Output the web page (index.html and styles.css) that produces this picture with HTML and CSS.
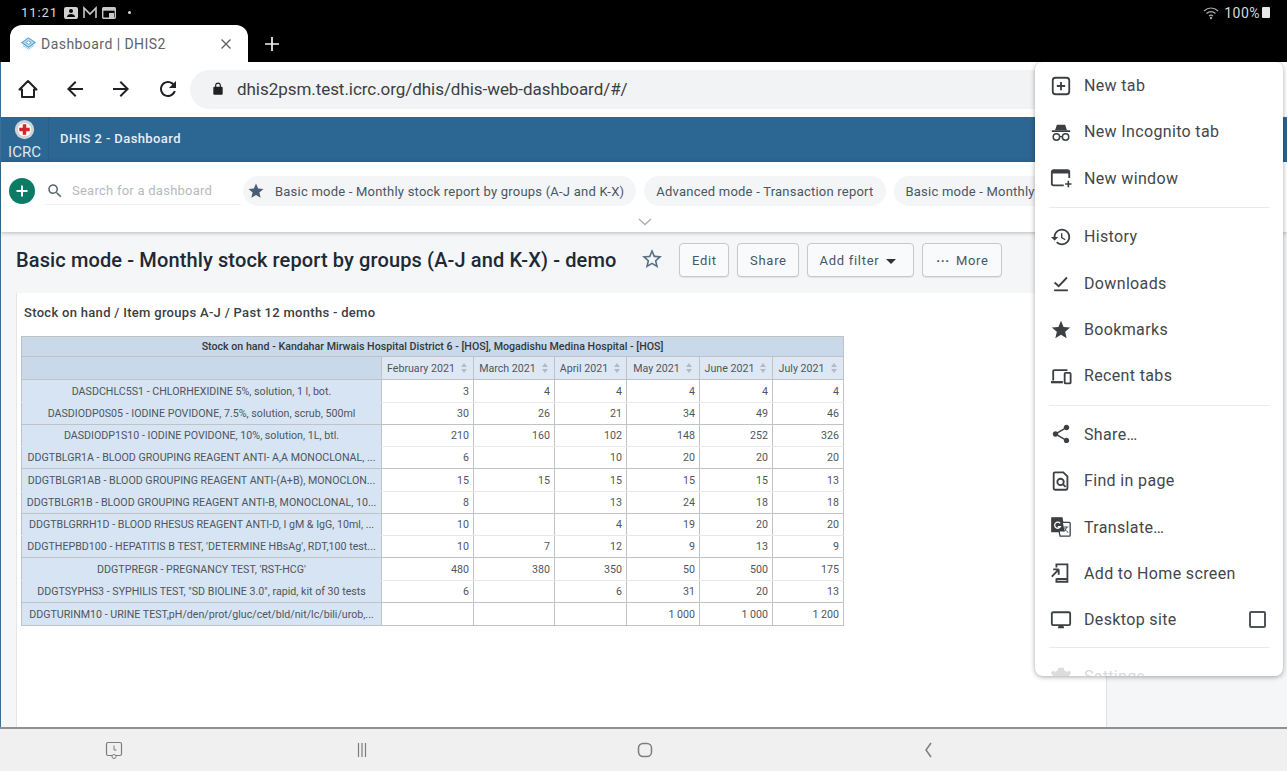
FILE: index.html
```html
<!DOCTYPE html>
<html lang="en">
<head>
    <meta charset="UTF-8">
    <meta name="viewport" content="width=device-width, initial-scale=1.0">
    <title>Dashboard | DHIS2</title>
    <link rel="stylesheet" href="styles.css">
</head>
<body>
    <div class="status-bar">
        <div class="status-left">
            <span class="clock">11:21</span>
            <svg class="status-icon" viewBox="0 0 16 14"><rect x="1" y="1" width="14" height="12" rx="2" fill="#d0d0d0"/><circle cx="8" cy="5" r="2" fill="#000"/><path d="M4 11c0-2 2-3 4-3s4 1 4 3z" fill="#000"/></svg>
            <svg class="status-icon" viewBox="0 0 16 14"><path d="M2 12V2l6 6 6-6v10" fill="none" stroke="#c8c8c8" stroke-width="1.6"/></svg>
            <svg class="status-icon" viewBox="0 0 16 14"><rect x="1.7" y="1.7" width="12.6" height="10.6" rx="1" fill="none" stroke="#c8c8c8" stroke-width="1.4"/><rect x="1.7" y="1.7" width="12.6" height="3" fill="#c8c8c8"/><rect x="8" y="7" width="5" height="5" fill="#c8c8c8"/></svg>
            <span class="status-dot"></span>
        </div>
        <div class="status-right">
            <svg class="wifi" viewBox="0 0 16 14"><path d="M1 5c4-4 10-4 14 0M3.500 7.500c2.600-2.500 6.400-2.500 9 0M6 10c1.200-1 2.800-1 4 0" fill="none" stroke="#a8a8a8" stroke-width="1.200"/><circle cx="8" cy="12" r="1.200" fill="#a8a8a8"/></svg>
            <span class="battery-text">100%</span>
            <span class="battery"></span>
        </div>
    </div>

    <div class="tab-strip">
        <div class="tab">
            <svg class="favicon" viewBox="0 0 16 16"><path d="M8 2l7 5-7 5-7-5z" fill="#bfe0f2" stroke="#5aa7d6" stroke-width="1.300"/><path d="M8 5l3 2-3 2-3-2z" fill="#fff" stroke="#5aa7d6"/><path d="M2 10l6 4 6-4" fill="none" stroke="#8cc4e6" stroke-width="1"/></svg>
            <span class="tab-title">Dashboard | DHIS2</span>
            <svg class="tab-close" viewBox="0 0 12 12"><path d="M1.500 1.500l9 9M10.500 1.500l-9 9" stroke="#5f6368" stroke-width="1.400"/></svg>
        </div>
        <svg class="tab-new" viewBox="0 0 14 14"><path d="M7 0v14M0 7h14" stroke="#f1f3f4" stroke-width="1.700"/></svg>
    </div>

    <div class="app">
        <div class="toolbar">
            <svg class="tool-icon" viewBox="0 0 24 24"><path d="M3.500 12.500L12 4l8.500 8.500H18V20H6v-7.500z" fill="none" stroke="#202124" stroke-width="2" stroke-linejoin="round"/></svg>
            <svg class="tool-icon" viewBox="0 0 24 24"><path d="M20 11H7.830l5.590-5.590L12 4l-8 8 8 8 1.410-1.410L7.830 13H20v-2z" fill="#202124"/></svg>
            <svg class="tool-icon" viewBox="0 0 24 24"><path d="M12 4l-1.410 1.410L16.170 11H4v2h12.170l-5.580 5.590L12 20l8-8z" fill="#202124"/></svg>
            <svg class="tool-icon" viewBox="0 0 24 24"><path d="M17.650 6.350C16.200 4.900 14.210 4 12 4c-4.420 0-7.990 3.580-7.990 8s3.570 8 7.990 8c3.730 0 6.840-2.550 7.730-6h-2.080c-.82 2.330-3.040 4-5.650 4-3.310 0-6-2.690-6-6s2.690-6 6-6c1.660 0 3.140.69 4.220 1.780L13 11h7V4l-2.350 2.350z" fill="#202124"/></svg>
            <div class="url-pill">
                <svg class="lock" viewBox="0 0 24 24"><path d="M18 8h-1V6c0-2.760-2.240-5-5-5S7 3.240 7 6v2H6c-1.100 0-2 .9-2 2v10c0 1.100.9 2 2 2h12c1.100 0 2-.9 2-2V10c0-1.100-.9-2-2-2zM9 6c0-1.660 1.340-3 3-3s3 1.340 3 3v2H9V6z" fill="#202124"/></svg>
                <span class="url-text">dhis2psm.test.icrc.org/dhis/dhis-web-dashboard/#/</span>
            </div>
        </div>

        <header class="app-header">
            <div class="logo">
                <svg class="logo-mark" viewBox="0 0 24 24"><circle cx="12" cy="12" r="11" fill="#cfd3d6"/><circle cx="12" cy="12" r="7.500" fill="#fff"/><path d="M10 6h4v4h4v4h-4v4h-4v-4H6v-4h4z" fill="#d8232a"/></svg>
                <span class="logo-text">ICRC</span>
            </div>
            <span class="app-title">DHIS 2 - Dashboard</span>
        </header>

        <div class="dash-bar">
            <div class="dash-row">
                <span class="add-btn"><svg viewBox="0 0 14 14"><path d="M7 1.500v11M1.500 7h11" stroke="#fff" stroke-width="2"/></svg></span>
                <div class="dash-search">
                    <svg viewBox="0 0 24 24"><path d="M15.500 14h-.79l-.28-.27C15.410 12.590 16 11.110 16 9.500 16 5.910 13.090 3 9.500 3S3 5.910 3 9.500 5.910 16 9.500 16c1.610 0 3.090-.59 4.230-1.570l.27.28v.79l5 4.990L20.490 19l-4.990-5zm-6 0C7.010 14 5 11.990 5 9.500S7.010 5 9.500 5 14 7.010 14 9.500 11.990 14 9.500 14z" fill="#5b6670"/></svg>
                    <span>Search for a dashboard</span>
                </div>
                <div class="chip chip-first">
                    <svg viewBox="0 0 24 24"><path d="M12 17.270L18.180 21l-1.640-7.030L22 9.240l-7.190-.61L12 2 9.190 8.630 2 9.240l5.460 4.730L5.820 21z" fill="#4a5f76"/></svg>
                    <span>Basic mode - Monthly stock report by groups (A-J and K-X)</span>
                </div>
                <div class="chip"><span>Advanced mode - Transaction report</span></div>
                <div class="chip chip-last"><span>Basic mode - Monthly</span></div>
            </div>
            <svg class="chevron" viewBox="0 0 14 8"><path d="M1 1l6 5.500L13 1" fill="none" stroke="#a9b1b8" stroke-width="1.400"/></svg>
        </div>

        <main class="content">
            <div class="title-row">
                <h1>Basic mode - Monthly stock report by groups (A-J and K-X) - demo</h1>
                <svg class="title-star" viewBox="0 0 24 24"><path d="M22 9.240l-7.190-.62L12 2 9.190 8.630 2 9.240l5.460 4.730L5.820 21 12 17.270 18.180 21l-1.630-7.030L22 9.240zM12 15.400l-3.760 2.270 1-4.280-3.320-2.880 4.380-.38L12 6.100l1.710 4.040 4.380.38-3.320 2.880 1 4.280L12 15.400z" fill="#5a6f85"/></svg>
                <div class="title-actions">
                    <button class="btn btn-edit">Edit</button>
                    <button class="btn btn-share">Share</button>
                    <button class="btn btn-filter">Add filter <span class="caret"></span></button>
                    <button class="btn btn-more"><span class="dots">···</span> More</button>
                </div>
            </div>

            <section class="card">
                <h2>Stock on hand / Item groups A-J / Past 12 months - demo</h2>
                <table class="pivot">
                    <colgroup>
                        <col class="col-label">
                        <col class="col-feb">
                        <col class="col-mar">
                        <col class="col-apr">
                        <col class="col-may">
                        <col class="col-jun">
                        <col class="col-jul">
                    </colgroup>
                    <thead>
                        <tr class="head-title"><th colspan="7">Stock on hand - Kandahar Mirwais Hospital District 6 - [HOS], Mogadishu Medina Hospital - [HOS]</th></tr>
                        <tr class="head-periods">
                            <th class="corner"></th>
                            <th>February 2021<span class="sort"></span></th>
                            <th>March 2021<span class="sort"></span></th>
                            <th>April 2021<span class="sort"></span></th>
                            <th>May 2021<span class="sort"></span></th>
                            <th>June 2021<span class="sort"></span></th>
                            <th>July 2021<span class="sort"></span></th>
                        </tr>
                    </thead>
                    <tbody>
                        <tr><th>DASDCHLC5S1 - CHLORHEXIDINE 5%, solution, 1 l, bot.</th><td>3</td><td>4</td><td>4</td><td>4</td><td>4</td><td>4</td></tr>
                        <tr><th>DASDIODP0S05 - IODINE POVIDONE, 7.5%, solution, scrub, 500ml</th><td>30</td><td>26</td><td>21</td><td>34</td><td>49</td><td>46</td></tr>
                        <tr><th>DASDIODP1S10 - IODINE POVIDONE, 10%, solution, 1L, btl.</th><td>210</td><td>160</td><td>102</td><td>148</td><td>252</td><td>326</td></tr>
                        <tr><th>DDGTBLGR1A - BLOOD GROUPING REAGENT ANTI- A,A MONOCLONAL, ...</th><td>6</td><td></td><td>10</td><td>20</td><td>20</td><td>20</td></tr>
                        <tr><th>DDGTBLGR1AB - BLOOD GROUPING REAGENT ANTI-(A+B), MONOCLON...</th><td>15</td><td>15</td><td>15</td><td>15</td><td>15</td><td>13</td></tr>
                        <tr><th>DDGTBLGR1B - BLOOD GROUPING REAGENT ANTI-B, MONOCLONAL, 10...</th><td>8</td><td></td><td>13</td><td>24</td><td>18</td><td>18</td></tr>
                        <tr><th>DDGTBLGRRH1D - BLOOD RHESUS REAGENT ANTI-D, I gM &amp; IgG, 10ml, ...</th><td>10</td><td></td><td>4</td><td>19</td><td>20</td><td>20</td></tr>
                        <tr><th>DDGTHEPBD100 - HEPATITIS B TEST, 'DETERMINE HBsAg', RDT,100 test...</th><td>10</td><td>7</td><td>12</td><td>9</td><td>13</td><td>9</td></tr>
                        <tr><th>DDGTPREGR - PREGNANCY TEST, 'RST-HCG'</th><td>480</td><td>380</td><td>350</td><td>50</td><td>500</td><td>175</td></tr>
                        <tr><th>DDGTSYPHS3 - SYPHILIS TEST, "SD BIOLINE 3.0", rapid, kit of 30 tests</th><td>6</td><td></td><td>6</td><td>31</td><td>20</td><td>13</td></tr>
                        <tr><th>DDGTURINM10 - URINE TEST,pH/den/prot/gluc/cet/bld/nit/lc/bili/urob,...</th><td></td><td></td><td></td><td>1 000</td><td>1 000</td><td>1 200</td></tr>
                    </tbody>
                </table>
            </section>
        </main>
    </div>

    <nav class="nav-bar">
        <svg class="nav-icon nav-recent" viewBox="0 0 20 20"><rect x="2.500" y="2.500" width="15" height="13" rx="1.500" fill="none" stroke="#7d7d7d" stroke-width="1.200"/><path d="M10 5.500V10h2.500" fill="none" stroke="#7d7d7d"/><circle cx="10" cy="16.500" r="2" fill="#f0f0f0" stroke="#7d7d7d"/></svg>
        <svg class="nav-icon nav-lines" viewBox="0 0 20 20"><path d="M6.500 3v14M10 3v14M13.500 3v14" stroke="#7d7d7d" stroke-width="1.200"/></svg>
        <svg class="nav-icon nav-home" viewBox="0 0 20 20"><rect x="3.500" y="3.500" width="13" height="13" rx="4.500" fill="none" stroke="#7d7d7d" stroke-width="1.500"/></svg>
        <svg class="nav-icon" viewBox="0 0 20 20"><path d="M13 3l-5 7 5 7" fill="none" stroke="#7d7d7d" stroke-width="1.500"/></svg>
    </nav>

    <div class="menu">
        <div class="menu-item"><svg viewBox="0 0 24 24"><rect x="3" y="3" width="18" height="18" rx="3" fill="none" stroke="#3c4043" stroke-width="2"/><path d="M12 7.500v9M7.500 12h9" stroke="#3c4043" stroke-width="2"/></svg><span>New tab</span></div>
        <div class="menu-item"><svg viewBox="0 0 24 24"><path d="M7.500 4h9l2 6h-13z" fill="#3c4043"/><path d="M2 11h20" stroke="#3c4043" stroke-width="2"/><circle cx="7" cy="17.500" r="3.500" fill="none" stroke="#3c4043" stroke-width="1.600"/><circle cx="17" cy="17.500" r="3.500" fill="none" stroke="#3c4043" stroke-width="1.600"/><path d="M10.500 17h3" stroke="#3c4043" stroke-width="1.400"/></svg><span>New Incognito tab</span></div>
        <div class="menu-item"><svg viewBox="0 0 24 24"><path d="M15 20H4a2 2 0 0 1-2-2V5.500a2 2 0 0 1 2-2h15a2 2 0 0 1 2 2V12" fill="none" stroke="#3c4043" stroke-width="2"/><path d="M2 4h19v3H2z" fill="#3c4043"/><path d="M20 15v7M16.500 18.500h7" stroke="#3c4043" stroke-width="1.800"/></svg><span>New window</span></div>
        <div class="menu-sep"></div>
        <div class="menu-item"><svg viewBox="0 0 24 24"><path d="M13 3c-4.970 0-9 4.030-9 9H1l3.890 3.890.07.14L9 12H6c0-3.870 3.130-7 7-7s7 3.130 7 7-3.130 7-7 7c-1.930 0-3.680-.79-4.940-2.060l-1.420 1.420C8.270 19.990 10.510 21 13 21c4.970 0 9-4.030 9-9s-4.030-9-9-9zm-1 5v5l4.280 2.540.72-1.210-3.500-2.080V8H12z" fill="#3c4043"/></svg><span>History</span></div>
        <div class="menu-item"><svg viewBox="0 0 24 24"><path d="M5 11.500l4.500 4L18.500 6" fill="none" stroke="#3c4043" stroke-width="2"/><path d="M4.500 20h15" stroke="#3c4043" stroke-width="2"/></svg><span>Downloads</span></div>
        <div class="menu-item"><svg viewBox="0 0 24 24"><path d="M12 17.270L18.180 21l-1.640-7.030L22 9.240l-7.190-.61L12 2 9.190 8.630 2 9.240l5.460 4.730L5.820 21z" fill="#3c4043"/></svg><span>Bookmarks</span></div>
        <div class="menu-item"><svg viewBox="0 0 24 24"><path d="M3.500 17V6.500a1 1 0 0 1 1-1H19" fill="none" stroke="#3c4043" stroke-width="2"/><path d="M1 17.500h13V20H1z" fill="#3c4043"/><rect x="16" y="8.500" width="6.500" height="11.500" rx="1" fill="none" stroke="#3c4043" stroke-width="2"/></svg><span>Recent tabs</span></div>
        <div class="menu-sep"></div>
        <div class="menu-item"><svg viewBox="0 0 24 24"><path d="M18 16.080c-.76 0-1.440.3-1.960.77L8.910 12.700c.05-.23.09-.46.09-.7s-.04-.47-.09-.7l7.050-4.110c.54.5 1.250.81 2.040.81 1.660 0 3-1.340 3-3s-1.340-3-3-3-3 1.340-3 3c0 .24.04.47.09.7L8.040 9.810C7.500 9.310 6.790 9 6 9c-1.660 0-3 1.340-3 3s1.340 3 3 3c.79 0 1.500-.31 2.040-.81l7.120 4.160c-.05.21-.08.43-.08.65 0 1.610 1.310 2.920 2.920 2.920s2.920-1.310 2.920-2.920-1.310-2.920-2.920-2.920z" fill="#3c4043"/></svg><span>Share…</span></div>
        <div class="menu-item"><svg viewBox="0 0 24 24"><path d="M5.500 2.500h9l4.500 4.500v13a1.500 1.500 0 0 1-1.500 1.500h-12A1.500 1.500 0 0 1 4 20V4a1.500 1.500 0 0 1 1.500-1.500z" fill="none" stroke="#3c4043" stroke-width="2"/><circle cx="11.500" cy="13" r="3.500" fill="none" stroke="#3c4043" stroke-width="2"/><path d="M14 15.500l3 3" stroke="#3c4043" stroke-width="2"/></svg><span>Find in page</span></div>
        <div class="menu-item"><svg viewBox="0 0 24 24"><path d="M2 2h11l1 5h7a1 1 0 0 1 1 1v13a1 1 0 0 1-1 1H11l-1-5H2z" fill="#fff" stroke="#3c4043" stroke-width="1.400"/><path d="M2 2h11l3 15H2z" fill="#3c4043"/><path d="M11 8a3.300 3.300 0 1 0 .4 3.500H8.500" fill="none" stroke="#fff" stroke-width="1.400"/><path d="M15 12h5M18 12c-.5 3-2 4.500-3 5M16 13c.5 2 2 4 4 5" fill="none" stroke="#3c4043"/></svg><span>Translate…</span></div>
        <div class="menu-item"><svg viewBox="0 0 24 24"><path d="M7 6V2.500h12V21.500H7V18" fill="none" stroke="#3c4043" stroke-width="2"/><path d="M9.500 8H3.500M9.500 8v6M9.500 8L2 16" fill="none" stroke="#3c4043" stroke-width="2"/><path d="M7 18.500h12" stroke="#3c4043" stroke-width="2"/></svg><span>Add to Home screen</span></div>
        <div class="menu-item"><svg viewBox="0 0 24 24"><rect x="2" y="3.500" width="20" height="14" rx="1.500" fill="none" stroke="#3c4043" stroke-width="2"/><path d="M9.500 18h5l1 3h-7z" fill="#3c4043"/></svg><span>Desktop site</span><i class="menu-check"></i></div>
        <div class="menu-sep menu-sep-last"></div>
        <div class="menu-item menu-faded"><svg viewBox="0 0 24 24"><path d="M9 3h6l.7 3 2.500 1.300 3-1 1.800 3-2.200 2.200v3l2.200 2.200-1.800 3-3-1-2.500 1.300-.7 3H9l-.7-3-2.500-1.300-3 1-1.800-3 2.200-2.200v-3L1 9.300l1.800-3 3 1L8.300 6z" fill="#dcdcdc"/></svg><span>Settings</span></div>
    </div>
</body>
</html>
```

FILE: styles.css
```css
* {
    box-sizing: border-box;
}
html, body {
    height: 100%;
}
body {
    margin: 0;
    overflow: hidden;
    display: flex;
    flex-direction: column;
    position: relative;
    background-color: #000;
    font-family: Roboto, sans-serif;
}

/* device status bar */
.status-bar {
    height: 25px;
    flex: none;
    display: flex;
    justify-content: space-between;
    align-items: center;
    padding: 0 17px 0 21px;
    color: #d8d8d8;
    font-size: 13px;
}
.status-left, .status-right {
    display: flex;
    align-items: center;
}
.clock {
    letter-spacing: .9px;
    margin-right: 5px;
}
.status-icon {
    width: 16px;
    height: 14px;
    margin-right: 3px;
}
.status-dot {
    width: 3px;
    height: 3px;
    margin-left: 8px;
    border-radius: 50%;
    background-color: #d8d8d8;
}
.wifi {
    width: 16px;
    height: 14px;
    margin-right: 5px;
}
.battery-text {
    font-size: 14px;
    letter-spacing: .5px;
}
.battery {
    width: 8px;
    height: 11px;
    margin-left: 2px;
    border-radius: 1px;
    background-color: #e8e8e8;
}

/* chrome tab strip */
.tab-strip {
    height: 37px;
    flex: none;
    display: flex;
    align-items: center;
    padding-left: 10px;
}
.tab {
    width: 238px;
    height: 37px;
    display: flex;
    align-items: center;
    padding: 0 16px 0 11px;
    border-radius: 12px 12px 0 0;
    background-color: #fff;
}
.favicon {
    width: 15px;
    height: 15px;
    margin-right: 5px;
}
.tab-title {
    flex: 1;
    font-size: 14px;
    letter-spacing: .45px;
    color: #5f6368;
}
.tab-close {
    width: 12px;
    height: 12px;
}
.tab-new {
    width: 14px;
    height: 14px;
    margin-left: 17px;
}

.app {
    flex: 1;
    min-height: 0;
    display: flex;
    flex-direction: column;
    background-color: #f4f6f8;
    border-left: 1px solid #3a6f98;
}

/* chrome toolbar */
.toolbar {
    height: 55px;
    flex: none;
    display: flex;
    align-items: center;
    padding: 0 0 1px 15px;
    background-color: #fff;
}
.tool-icon {
    width: 24px;
    height: 24px;
    margin-right: 22.500px;
}
.url-pill {
    width: 990px;
    height: 39px;
    margin-left: -12px;
    display: flex;
    align-items: center;
    padding-left: 21px;
    border-radius: 20px;
    background-color: #f1f3f4;
}
.lock {
    width: 14px;
    height: 14px;
    margin-right: 12px;
}
.url-text {
    font-size: 17px;
    letter-spacing: -.05px;
    color: #3c4043;
}

/* dhis2 header */
.app-header {
    height: 45px;
    flex: none;
    display: flex;
    align-items: center;
    background-color: #2c6693;
}
.logo {
    width: 48px;
    height: 45px;
    display: flex;
    flex-direction: column;
    align-items: center;
    border-right: 1px solid #2a5f89;
}
.logo-mark {
    width: 21px;
    height: 21px;
    margin-top: 2px;
}
.logo-text {
    margin-top: 4px;
    font-size: 15px;
    line-height: 17px;
    color: #dfe7ee;
}
.app-title {
    margin: 0 0 2px 11px;
    font-size: 13px;
    font-weight: 500;
    letter-spacing: .4px;
    color: #e6eef4;
}

/* dashboard bar */
.dash-bar {
    height: 70px;
    flex: none;
    position: relative;
    z-index: 1;
    padding: 14px 0 0 8px;
    background-color: #fff;
    box-shadow: 0 1px 4px rgba(0, 0, 0, .25);
    overflow: hidden;
}
.dash-row {
    display: flex;
    align-items: center;
    white-space: nowrap;
}
.add-btn {
    width: 26px;
    height: 26px;
    flex: none;
    display: flex;
    align-items: center;
    justify-content: center;
    border-radius: 50%;
    background-color: #0b7b66;
}
.add-btn svg {
    width: 14px;
    height: 14px;
}
.dash-search {
    width: 196px;
    height: 28px;
    flex: none;
    margin-left: 10px;
    display: flex;
    align-items: center;
    padding-left: 1px;
    border-bottom: 1px solid #f0f2f4;
    font-size: 13px;
    letter-spacing: .25px;
    color: #b4bbc2;
}
.dash-search svg {
    width: 18px;
    height: 18px;
    margin-right: 8px;
}
.chip {
    height: 30px;
    flex: none;
    display: flex;
    align-items: center;
    margin-left: 8px;
    padding: 0 12px;
    border-radius: 15px;
    background-color: #f3f5f7;
    font-size: 13px;
    letter-spacing: .22px;
    color: #4a5763;
}
.chip-first {
    margin-left: 2px;
    padding-left: 4px;
}
.chip-first svg {
    width: 18px;
    height: 18px;
    margin-right: 10px;
}
.chip-last {
    padding-right: 160px;
}
.chevron {
    display: block;
    width: 14px;
    height: 8px;
    margin: 12px 0 0 629px;
}

/* main content */
.content {
    flex: 1;
    min-height: 0;
    width: 1106px;
    padding-left: 15px;
    border-right: 1px solid #dfe2e5;
}
.title-row {
    height: 61px;
    padding-top: 11px;
    display: flex;
    align-items: flex-start;
}
h1 {
    margin: 6px 0 0;
    font-size: 20px;
    line-height: 22px;
    font-weight: 500;
    letter-spacing: .125px;
    color: #212934;
    white-space: nowrap;
}
.title-star {
    width: 24px;
    height: 24px;
    margin: 4px 0 0 24px;
}
.title-actions {
    display: flex;
    gap: 8px;
    margin-left: 15px;
}
.btn {
    height: 34px;
    padding: 0;
    border: 1px solid #c4c9cc;
    border-radius: 4px;
    background-color: #f9fafb;
    box-shadow: 0 1px 1px rgba(0, 0, 0, .08);
    font-family: Roboto, sans-serif;
    font-size: 13px;
    letter-spacing: .7px;
    color: #4a5763;
}
.btn-edit {
    width: 50px;
}
.btn-share {
    width: 62px;
}
.btn-filter {
    width: 107px;
    padding-right: 6px;
}
.btn-more {
    width: 80px;
}
.caret {
    display: inline-block;
    margin-left: 3px;
    vertical-align: middle;
    border-top: 5px solid #2e3338;
    border-left: 5px solid transparent;
    border-right: 5px solid transparent;
}
.dots {
    margin-right: 2px;
    font-weight: 700;
}

.card {
    height: 434px;
    padding: 0 4px;
    background-color: #fff;
    border-left: 1px solid #e4e7ea;
}
h2 {
    margin: 0;
    padding: 12px 3px 15px;
    font-size: 13px;
    line-height: 16px;
    font-weight: 500;
    letter-spacing: .3px;
    color: #3a4046;
}

/* pivot table */
.pivot {
    width: 822px;
    table-layout: fixed;
    border-collapse: collapse;
    font-size: 10.67px;
}
.col-label {
    width: 360px;
}
.col-feb {
    width: 92px;
}
.col-mar {
    width: 81px;
}
.col-apr {
    width: 72px;
}
.col-may {
    width: 73px;
}
.col-jun {
    width: 73px;
}
.col-jul {
    width: 71px;
}
.pivot th, .pivot td {
    height: 22px;
    padding: 0 4px;
    border: 1px solid #e6e8ea;
    border-left-color: #c0c3c6;
    border-right-color: #c0c3c6;
    font-weight: 400;
    color: #50565c;
    white-space: nowrap;
    overflow: hidden;
}
.pivot td {
    text-align: right;
    background-color: #fff;
}
.pivot tbody th {
    padding: 0 3px;
    text-align: center;
    background-color: #d6e4f4;
    border-color: #d6e4f4 #c0c3c6;
}
.pivot tbody tr:nth-child(4n+1) th, .pivot tbody tr:nth-child(4n+1) td {
    height: 23px;
}
.pivot tbody tr:nth-child(even) th, .pivot tbody tr:nth-child(even) td {
    border-bottom-color: #c0c3c6;
}
.pivot tbody tr:last-child th, .pivot tbody tr:last-child td {
    height: 23px;
    border-bottom-color: #c0c3c6;
}
.pivot thead th {
    border-color: #c0c3c6;
}
.pivot .head-title th {
    height: 20px;
    background-color: #c9d9ea;
    font-weight: 500;
    color: #33383d;
}
.pivot .head-periods th {
    height: 23px;
    padding: 0 2px;
    background-color: #dee8f5;
}
.pivot .head-periods .corner {
    background-color: #c9d9ea;
}
.sort {
    display: inline-block;
    width: 7px;
    height: 10px;
    margin-left: 6px;
    vertical-align: -1px;
    position: relative;
}
.sort::before, .sort::after {
    content: "";
    position: absolute;
    left: 0;
    border-left: 3.500px solid transparent;
    border-right: 3.500px solid transparent;
}
.sort::before {
    top: 0;
    border-bottom: 4px solid #b3bac2;
}
.sort::after {
    bottom: 0;
    border-top: 4px solid #b3bac2;
}

/* android nav bar */
.nav-bar {
    height: 44px;
    flex: none;
    display: flex;
    align-items: center;
    padding-left: 104px;
    border-top: 2px solid #8f9295;
    background-color: #f0f0f0;
}
.nav-icon {
    width: 20px;
    height: 20px;
}
.nav-recent {
    margin-right: 228px;
}
.nav-lines, .nav-home {
    margin-right: 263px;
}

/* overflow menu, sits over the page */
.menu {
    position: absolute;
    left: 1035px;
    top: 62px;
    width: 248px;
    height: 614px;
    padding-top: .4px;
    overflow: hidden;
    border-radius: 8px;
    background-color: #fff;
    box-shadow: 0 1px 5px rgba(0, 0, 0, .35);
    z-index: 2;
}
.menu-item {
    height: 46.400px;
    flex: none;
    display: flex;
    align-items: center;
    padding-left: 15px;
    padding-right: 17px;
    font-size: 16px;
    letter-spacing: .35px;
    color: #43474b;
}
.menu-item svg {
    width: 22px;
    height: 22px;
    margin-right: 12px;
    flex: none;
}
.menu-sep {
    height: 1px;
    margin: 5.500px 14px;
    background-color: #e8eaed;
}
.menu-sep-last {
    margin-top: 3.500px;
}
.menu-check {
    width: 17px;
    height: 17px;
    margin-left: auto;
    border: 2px solid #50555a;
    border-radius: 2px;
}
.menu-faded {
    color: #d8dadc;
}
```
